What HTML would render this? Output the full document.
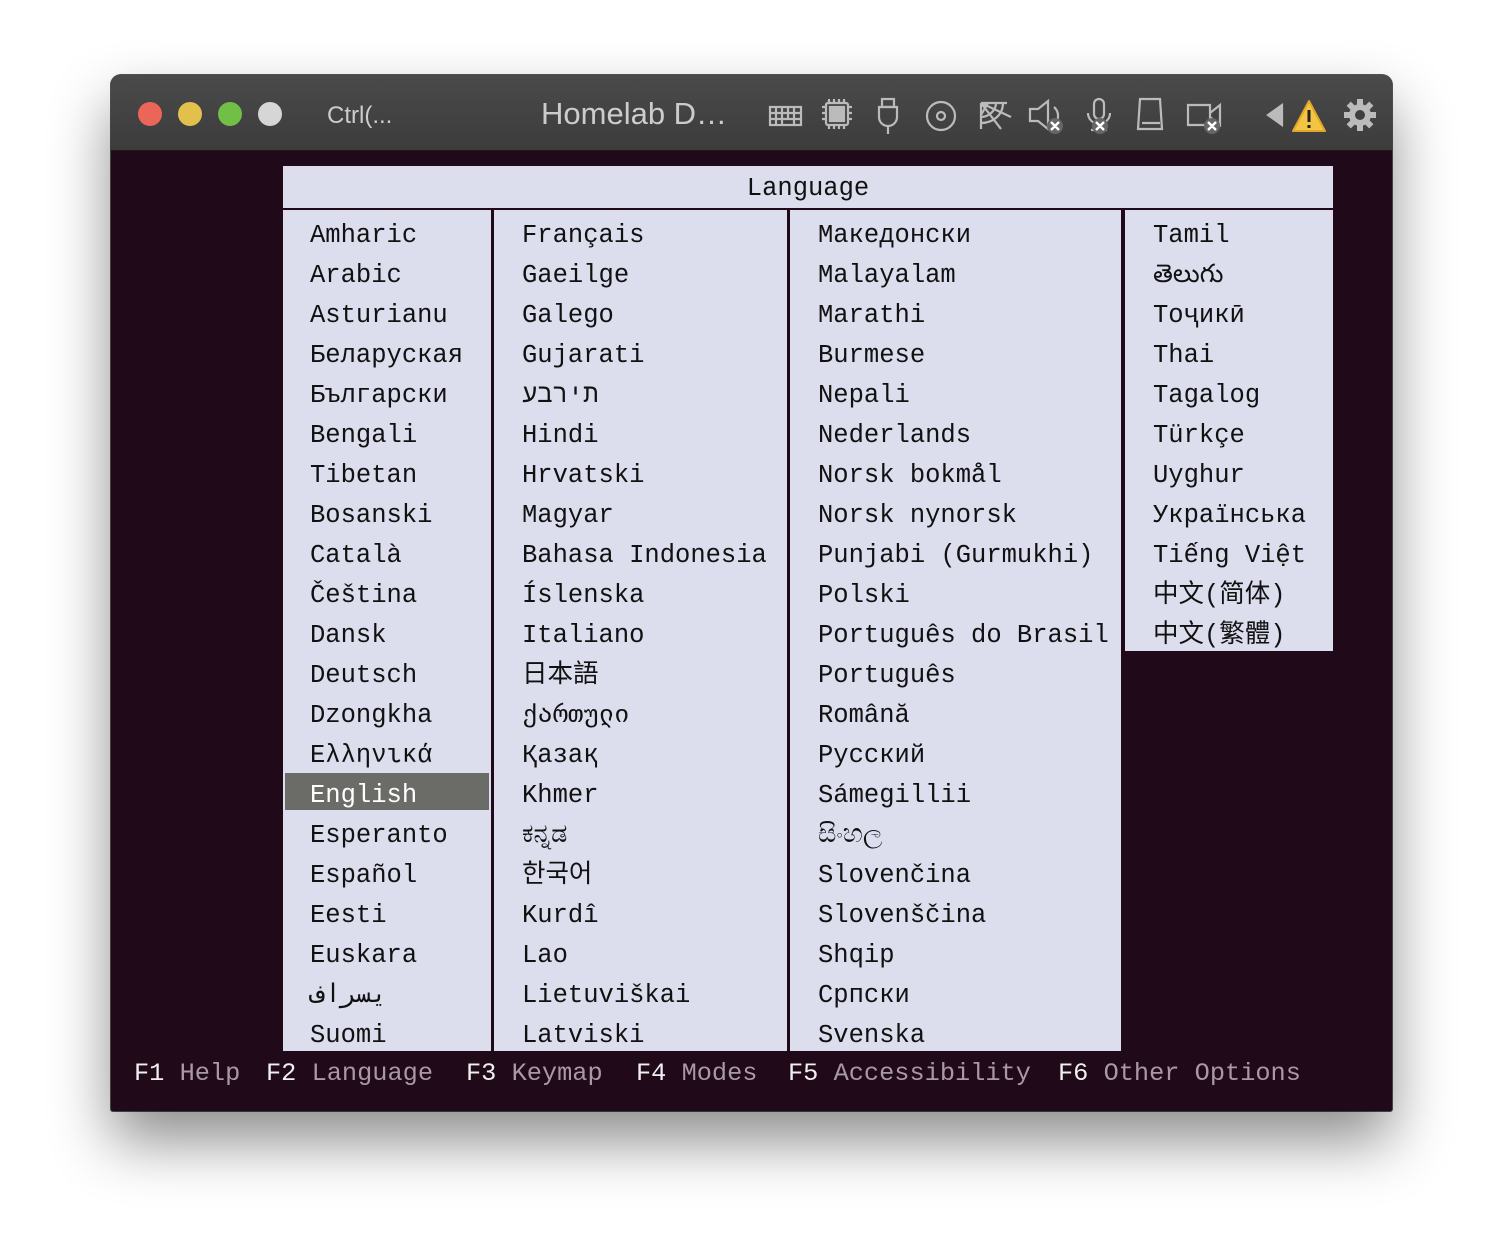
<!DOCTYPE html>
<html><head><meta charset="utf-8">
<style>
*{margin:0;padding:0;box-sizing:border-box}
body{width:1504px;height:1260px;background:#fff;position:relative;overflow:hidden;font-family:"Liberation Mono","Noto Sans CJK SC",monospace}
.win{position:absolute;left:111px;top:75px;width:1281px;height:1036px;border-radius:10px 10px 2px 2px;overflow:hidden;background:#200918;box-shadow:0 30px 60px rgba(0,0,0,.45),0 0 0 1px #555}
.tb{position:absolute;left:0;top:0;width:100%;height:76px;background:linear-gradient(#4a4a4a,#3c3c3c);border-bottom:1px solid #1a1a1a}
.dot{position:absolute;top:27px;width:24px;height:24px;border-radius:50%}
.tt{position:absolute;font-family:"Liberation Sans",sans-serif;color:#ccc}
.ab{position:absolute}
.panel{position:absolute;background:#dcdeee}
.col{position:absolute;font-size:25.5px;color:#111;line-height:40px;white-space:pre}
.fk{position:absolute;font-size:25.3px;line-height:40px;white-space:pre}
.w{color:#f0f0f0}.g{color:#a898a8}
.o{unicode-bidi:bidi-override;direction:ltr}
</style></head><body>
<div class="win">
<div class="tb">
<div class="dot" style="left:27px;background:#ec6559"></div>
<div class="dot" style="left:67px;background:#e1c04c"></div>
<div class="dot" style="left:107px;background:#71bf46"></div>
<div class="dot" style="left:147px;background:#d6d6d6"></div>
<div class="tt" style="left:216px;top:27px;font-size:24px">Ctrl(...</div>
<div class="tt" style="left:430px;top:21px;font-size:31px">Homelab D…</div>
<svg class="ab" style="left:655px;top:20px" width="600" height="40" viewBox="0 0 600 40" fill="none" stroke="#bbb" stroke-width="2.2">
<rect x="4" y="12" width="31" height="18"/><path d="M4 18h31M4 24h31M10 12v18M16 12v18M22 12v12M28 12v18"/>
<rect x="60" y="8" width="22" height="22" rx="2"/><rect x="64" y="12" width="14" height="14" fill="#bbb"/><path d="M63 4v4M68 4v4M73 4v4M78 4v4M63 30v4M68 30v4M73 30v4M78 30v4M56 12h4M56 18h4M56 24h4M82 12h4M82 18h4M82 24h4"/>
<rect x="116" y="4" width="12" height="8"/><path d="M113 12h18v10a9 9 0 0 1-18 0z M122 31v8"/>
<circle cx="175" cy="21" r="14"/><circle cx="175" cy="21" r="4"/>
<path d="M215 8v26M215 8h26M215 8l20 26M215 8l30 14M222 8l-7 12M230 8c0 8-8 14-15 14M237 8c0 12-10 20-22 20"/>
<path d="M264 14h8l10-8v28l-10-8h-8z M288 12a12 12 0 0 1 0 18"/>
<rect x="328" y="4" width="10" height="20" rx="5"/><path d="M322 18a11 11 0 0 0 22 0M333 29v6M325 35h16"/>
<path d="M374 4h20l2 30h-24z M376 28h18"/>
<path d="M422 10h22v20h-22z M444 18l10-8v20l-10-8"/>
<path d="M502 20l14-10v20z" fill="#bbb"/>
</svg>
<svg class="ab" style="left:695px;top:33px" width="470" height="30">
<g fill="#666"><circle cx="249" cy="18" r="8"/><circle cx="294" cy="18" r="8"/><circle cx="406" cy="18" r="8"/></g>
<g stroke="#fff" stroke-width="2.4"><path d="M245 14l8 8M253 14l-8 8M290 14l8 8M298 14l-8 8M402 14l8 8M410 14l-8 8"/></g>
</svg>
<svg class="ab" style="left:1180px;top:24px" width="90" height="36">
<path d="M18 2l16 30H2z" fill="#f4c542" stroke="#e0a82a" stroke-width="2" stroke-linejoin="round"/><path d="M18 11v12M18 26v3" stroke="#222" stroke-width="3"/>
<g transform="translate(69,16)"><circle r="11" fill="#bbb"/><circle r="5" fill="#3f3f3f"/>
<g fill="#bbb"><rect x="-3" y="-16" width="6" height="7"/><rect x="-3" y="9" width="6" height="7"/><rect x="-16" y="-3" width="7" height="6"/><rect x="9" y="-3" width="7" height="6"/>
<rect x="-3" y="-16" width="6" height="7" transform="rotate(45)"/><rect x="-3" y="9" width="6" height="7" transform="rotate(45)"/><rect x="-16" y="-3" width="7" height="6" transform="rotate(45)"/><rect x="9" y="-3" width="7" height="6" transform="rotate(45)"/></g></g>
</svg>
</div>
<div class="panel" style="left:172px;top:91px;width:1050px;height:42px;text-align:center;font-size:25.5px;line-height:46px;color:#111">Language</div>
<div class="panel" style="left:172px;top:135px;width:208px;height:841px"></div>
<div class="panel" style="left:383px;top:135px;width:293px;height:841px"></div>
<div class="panel" style="left:679px;top:135px;width:331px;height:841px"></div>
<div class="panel" style="left:1014px;top:135px;width:208px;height:441px"></div>
<div class="ab" style="left:174px;top:698px;width:204px;height:37px;background:#6b6b68"></div>
<div class="col" style="left:199px;top:141px">Amharic
Arabic
Asturianu
Беларуская
Български
Bengali
Tibetan
Bosanski
Català
Čeština
Dansk
Deutsch
Dzongkha
Ελληνικά
<span style="color:#fff">English</span>
Esperanto
Español
Eesti
Euskara
<span class="o">فارسی</span>
Suomi</div>
<div class="col" style="left:411px;top:141px">Français
Gaeilge
Galego
Gujarati
<span class="o">עברית</span>
Hindi
Hrvatski
Magyar
Bahasa Indonesia
Íslenska
Italiano
日本語
ქართული
Қазақ
Khmer
ಕನ್ನಡ
한국어
Kurdî
Lao
Lietuviškai
Latviski</div>
<div class="col" style="left:707px;top:141px">Македонски
Malayalam
Marathi
Burmese
Nepali
Nederlands
Norsk bokmål
Norsk nynorsk
Punjabi (Gurmukhi)
Polski
Português do Brasil
Português
Română
Русский
Sámegillii
සිංහල
Slovenčina
Slovenščina
Shqip
Српски
Svenska</div>
<div class="col" style="left:1042px;top:141px">Tamil
తెలుగు
Тоҷикӣ
Thai
Tagalog
Türkçe
Uyghur
Українська
Tiếng Việt
中文(简体)
中文(繁體)</div>
<div class="fk" style="left:23px;top:979px"><span class="w">F1</span> <span class="g">Help</span></div>
<div class="fk" style="left:155px;top:979px"><span class="w">F2</span> <span class="g">Language</span></div>
<div class="fk" style="left:355px;top:979px"><span class="w">F3</span> <span class="g">Keymap</span></div>
<div class="fk" style="left:525px;top:979px"><span class="w">F4</span> <span class="g">Modes</span></div>
<div class="fk" style="left:677px;top:979px"><span class="w">F5</span> <span class="g">Accessibility</span></div>
<div class="fk" style="left:947px;top:979px"><span class="w">F6</span> <span class="g">Other Options</span></div>
</div>
</body></html>
